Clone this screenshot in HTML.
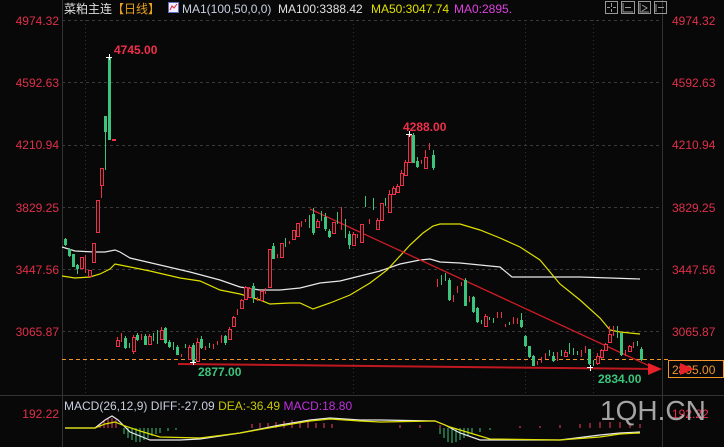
<!DOCTYPE html>
<html><head><meta charset="utf-8"><style>
body{margin:0;background:#080808;width:724px;height:447px;overflow:hidden;font-family:"Liberation Sans","Noto Sans CJK SC",sans-serif}
svg{position:absolute;left:0;top:0}
</style></head><body>
<svg width="724" height="447" viewBox="0 0 724 447" xmlns="http://www.w3.org/2000/svg" font-family="Liberation Sans, Noto Sans CJK SC, sans-serif">
<rect width="724" height="447" fill="#080808"/>
<!-- grid -->
<g stroke="#3a3a3a" stroke-dasharray="3,3" stroke-width="1">
<line x1="62" y1="20.5" x2="662" y2="20.5"/><line x1="62" y1="82.5" x2="662" y2="82.5"/>
<line x1="62" y1="145.5" x2="662" y2="145.5"/><line x1="62" y1="207.5" x2="662" y2="207.5"/>
<line x1="62" y1="269.5" x2="662" y2="269.5"/><line x1="62" y1="331.5" x2="662" y2="331.5"/>
</g>
<g stroke="#333" stroke-dasharray="1,3"><line x1="85.5" y1="20" x2="662" y2="20" stroke="none"/>
<line x1="85.5" y1="20" x2="85.5" y2="395"/><line x1="353.5" y1="20" x2="353.5" y2="395"/><line x1="525.5" y1="20" x2="525.5" y2="395"/><line x1="593.5" y1="20" x2="593.5" y2="395"/>
</g>
<line x1="62.5" y1="0" x2="62.5" y2="447" stroke="#333"/>
<line x1="662.5" y1="0" x2="662.5" y2="447" stroke="#333"/>
<line x1="0" y1="395.5" x2="724" y2="395.5" stroke="#333"/>
<!-- orange dashed -->
<line x1="62" y1="359.5" x2="668" y2="359.5" stroke="#f0962a" stroke-dasharray="4,3"/>
<!-- MA lines -->
<polyline fill="none" stroke="#e8e8e8" stroke-width="1.2" points="62,247 75,251 95,252 105,252 115,250 120,252 130,258 160,265 190,272 220,280 240,287 260,290 280,290 300,288 320,283 340,281 360,276 380,271 400,264 420,260 430,259 440,262 460,263 480,265 500,267 512,277 580,277 640,279"/>
<polyline fill="none" stroke="#e0e000" stroke-width="1.2" points="62,276 75,278 90,277 100,274 110,269 115,264 120,265 150,271 180,278 200,281 220,290 240,294 260,300 270,304 290,303 300,303 313,309 330,303 350,295 370,283 387,270 400,256 410,245 423,233 433,226 440,224 460,224 480,230 500,238 520,247 540,260 560,284 580,300 600,318 610,330 620,332 640,334"/>
<!-- trend lines -->
<line x1="310" y1="209" x2="656" y2="369" stroke="#d01c24" stroke-width="1.3"/>
<line x1="178" y1="364" x2="656" y2="369" stroke="#c01820" stroke-width="2"/>
<polygon points="648,363 662,369 648,375" fill="#e8202a"/>
<polygon points="672,363 686,369 672,375" fill="#e8202a"/>
<!-- candles: red -->
<g fill="none" stroke="#f0304a" stroke-width="1">
<path d="M81.5 257v12M85.5 255v18M89.5 270v7M93.5 243v20M97.5 200v33M101.5 168v30M113.5 139v1M117.5 337v10M121.5 333v9M133.5 335v19M141.5 334v6M149.5 334v11M161.5 327v13M181.5 354v3M189.5 345v15M197.5 338v24M205.5 346v4M213.5 344v5M217.5 341v4M221.5 335v8M229.5 327v13M233.5 316v11M237.5 309v6M241.5 299v10M245.5 286v14M249.5 287v11M257.5 297v4M261.5 290v11M265.5 288v6M269.5 249v39M277.5 254v4M281.5 243v15M289.5 241v3M293.5 230v10M297.5 223v14M301.5 221v6M305.5 219v3M317.5 219v9M333.5 222v12M341.5 207v23M353.5 232v14M357.5 234v4M361.5 224v19M369.5 219v5M377.5 218v12M381.5 203v18M389.5 190v23M393.5 186v9M397.5 184v9M401.5 170v16M405.5 160v16M409.5 133v30M421.5 160v4M425.5 150v19M429.5 143v7M437.5 279v8M453.5 295v7M457.5 286v7M461.5 282v4M469.5 296v6M485.5 314v13M497.5 312v6M501.5 312v6M505.5 324v3M513.5 317v7M517.5 318v6M537.5 361v4M541.5 357v6M545.5 353v6M557.5 352v9M565.5 350v7M581.5 350v7M585.5 346v7M597.5 353v12M601.5 349v10M605.5 343v8M609.5 326v17M613.5 326v10M625.5 350v6M629.5 345v7M633.5 342v6"/>
</g>
<g fill="#080808" stroke="#f0304a" stroke-width="1">
<rect x="80.5" y="257.5" width="3" height="11"/><rect x="88.5" y="270.5" width="3" height="6"/><rect x="92.5" y="243.5" width="3" height="19"/><rect x="96.5" y="200.5" width="3" height="32"/><rect x="100.5" y="168.5" width="3" height="17"/>
<rect x="116.5" y="340.5" width="3" height="6"/><rect x="132.5" y="337.5" width="3" height="14"/><rect x="148.5" y="336.5" width="3" height="8"/><rect x="160.5" y="330.5" width="3" height="9"/><rect x="188.5" y="347.5" width="3" height="12"/><rect x="196.5" y="342.5" width="3" height="19"/><rect x="228.5" y="329.5" width="3" height="10"/><rect x="232.5" y="317.5" width="3" height="9"/><rect x="240.5" y="300.5" width="3" height="8"/><rect x="244.5" y="287.5" width="3" height="12"/><rect x="248.5" y="288.5" width="3" height="9"/><rect x="260.5" y="291.5" width="3" height="9"/><rect x="268.5" y="249.5" width="3" height="38"/><rect x="280.5" y="243.5" width="3" height="14"/><rect x="292.5" y="230.5" width="3" height="9"/><rect x="296.5" y="223.5" width="3" height="13"/><rect x="316.5" y="221.5" width="3" height="6"/><rect x="332.5" y="222.5" width="3" height="11"/><rect x="352.5" y="234.5" width="3" height="11"/><rect x="360.5" y="224.5" width="3" height="18"/><rect x="376.5" y="220.5" width="3" height="9"/><rect x="380.5" y="203.5" width="3" height="17"/><rect x="388.5" y="194.5" width="3" height="18"/><rect x="392.5" y="188.5" width="3" height="6"/><rect x="396.5" y="186.5" width="3" height="6"/><rect x="400.5" y="173.5" width="3" height="12"/><rect x="404.5" y="162.5" width="3" height="13"/><rect x="408.5" y="135.5" width="3" height="27"/><rect x="424.5" y="157.5" width="3" height="11"/>
<rect x="484.5" y="316.5" width="3" height="10"/><rect x="608.5" y="334.5" width="3" height="8"/><rect x="600.5" y="350.5" width="3" height="7"/><rect x="596.5" y="356.5" width="3" height="7"/><rect x="604.5" y="344.5" width="3" height="6"/><rect x="564.5" y="352.5" width="3" height="4"/><rect x="628.5" y="346.5" width="3" height="5"/>
</g>
<rect x="112" y="139" width="4" height="2" fill="#f0304a"/>
<!-- candles: green -->
<g stroke="#3cc47c" stroke-width="1"><path d="M65.5 238v8M69.5 248v9M73.5 254v13M77.5 264v10M105.5 116v54M109.5 57v83M125.5 336v13M129.5 343v5M137.5 333v8M145.5 334v11M153.5 333v8M157.5 330v14M165.5 327v17M169.5 340v8M173.5 342v8M177.5 345v10M185.5 344v4M193.5 343v22M201.5 336v13M209.5 343v5M225.5 335v10M253.5 283v20M273.5 243v16M285.5 238v9M309.5 215v13M313.5 208v27M321.5 211v10M325.5 213v18M329.5 229v9M337.5 212v12M345.5 219v19M349.5 231v18M365.5 196v11M373.5 198v12M385.5 198v8M413.5 133v30M417.5 157v11M433.5 150v20M441.5 275v10M445.5 273v8M449.5 278v23M465.5 278v28M473.5 296v17M477.5 307v16M481.5 320v4M489.5 317v3M493.5 318v5M509.5 322v3M521.5 313v15M525.5 335v12M529.5 346v12M533.5 355v11M549.5 350v6M553.5 352v10M561.5 350v6M569.5 343v11M573.5 348v7M577.5 351v4M589.5 349v16M593.5 360v6M617.5 326v12M621.5 333v23M637.5 341v5M641.5 347v14"/></g>
<g fill="#3cc47c"><rect x="64" y="239" width="3" height="6"/><rect x="68" y="249" width="3" height="7"/><rect x="72" y="254" width="3" height="13"/><rect x="76" y="265" width="3" height="4"/><rect x="104" y="116" width="3" height="16"/><rect x="108" y="57" width="3" height="83"/><rect x="124" y="338" width="3" height="10"/><rect x="136" y="335" width="3" height="5"/><rect x="144" y="336" width="3" height="9"/><rect x="164" y="328" width="3" height="15"/><rect x="168" y="342" width="3" height="5"/><rect x="176" y="347" width="3" height="8"/><rect x="192" y="345" width="3" height="17"/><rect x="200" y="339" width="3" height="9"/><rect x="224" y="336" width="3" height="7"/><rect x="252" y="286" width="3" height="12"/><rect x="272" y="246" width="3" height="13"/><rect x="312" y="214" width="3" height="19"/><rect x="324" y="217" width="3" height="12"/><rect x="328" y="231" width="3" height="6"/><rect x="348" y="234" width="3" height="11"/><rect x="412" y="135" width="3" height="28"/><rect x="416" y="161" width="3" height="6"/><rect x="432" y="155" width="3" height="13"/><rect x="448" y="280" width="3" height="20"/><rect x="464" y="280" width="3" height="26"/><rect x="472" y="297" width="3" height="15"/><rect x="476" y="308" width="3" height="14"/><rect x="520" y="320" width="3" height="7"/><rect x="524" y="336" width="3" height="10"/><rect x="528" y="346" width="3" height="11"/><rect x="532" y="356" width="3" height="10"/><rect x="552" y="356" width="3" height="5"/><rect x="588" y="349" width="3" height="15"/><rect x="620" y="333" width="3" height="22"/><rect x="640" y="349" width="3" height="11"/></g>
<!-- markers -->
<g stroke="#fff" stroke-width="1"><path d="M106 57.5h6M109.5 54v6M406 134.5h6M409.5 131v6M190 362.5h6M193.5 360v5M587 367.5h6M590.5 365v6"/></g>
<!-- annotations -->
<g font-size="12" font-weight="bold"><text x="114" y="54" fill="#f0304a">4745.00</text><text x="403" y="131" fill="#f0304a">4288.00</text><text x="198" y="376" fill="#3cc47c">2877.00</text><text x="598" y="383" fill="#3cc47c">2834.00</text></g>
<!-- axis labels -->
<g font-size="12" fill="#e0304a"><g text-anchor="end"><text x="59" y="25">4974.32</text><text x="59" y="87">4592.63</text><text x="59" y="149">4210.94</text><text x="59" y="212">3829.25</text><text x="59" y="274">3447.56</text><text x="59" y="336">3065.87</text><text x="59" y="418">192.22</text></g>
<text x="672" y="25">4974.32</text><text x="672" y="87">4592.63</text><text x="672" y="149">4210.94</text><text x="672" y="212">3829.25</text><text x="672" y="274">3447.56</text><text x="672" y="336">3065.87</text><text x="672" y="418">192.22</text></g>
<rect x="668.5" y="360.5" width="55" height="17" fill="#080808" stroke="#f0962a"/>
<text x="672" y="374" font-size="12" fill="#f0962a">2895.00</text>
<polygon points="680,363 694,369 680,375" fill="#e8202a"/>
<!-- header -->
<g font-size="12"><text x="64" y="13" fill="#e0e0e0">菜粕主连</text><text x="112" y="13" fill="#e8a020">【日线】</text>
<rect x="168.5" y="2.5" width="10" height="10" fill="#f0f0ff" stroke="#6070c0"/><path d="M170 10l2-4 2 2 3-4" stroke="#e02030" fill="none"/>
<text x="182" y="13" fill="#c8d0e0">MA1(100,50,0,0)</text><text x="278" y="13" fill="#e0e0e0">MA100:3388.42</text><text x="371" y="13" fill="#e0e000">MA50:3047.74</text><text x="454" y="13" fill="#e040e0">MA0:2895.</text></g>
<g fill="none" stroke="#999"><rect x="605.5" y="1.5" width="12" height="12"/><rect x="621.5" y="1.5" width="13" height="12"/><rect x="638.5" y="1.5" width="12" height="12"/><rect x="654.5" y="1.5" width="12" height="12"/>
<path d="M611.5 3v4M611.5 9v3M607 7.5h3M613 7.5h3M623 3v9h10M625 7.5h6M640 3v9h9M642 5l5 3-5 3M656 4v8M658 7.5h6"/></g>
<!-- MACD -->
<text x="64" y="410" font-size="12" fill="#c8d0e0">MACD(26,12,9) DIFF:-27.09 <tspan fill="#c8c800">DEA:-36.49</tspan> <tspan fill="#c030e0">MACD:18.80</tspan></text>
<g stroke="#f04060" stroke-width="1"><path d="M100 428v-4M104 428v-7M108 428v-10M112 428v-10M116 428v-8M400 428v-3M420 428v-3M440 428v-3M520 428v-2M540 428v-2M560 428v-3M580 428v-4M590 428v-5M600 428v-6M610 428v-6M620 428v-6M630 428v-5M640 428v-4M276 428v-6M284 428v-7M292 428v-8M300 428v-7M308 428v-6M316 428v-5M324 428v-5M332 428v-4M252 428v-4M260 428v-5M268 428v-5"/></g>
<g stroke="#3cc47c" stroke-width="1"><path d="M124 428v6M128 428v10M132 428v12M136 428v14M140 428v14M144 428v12M148 428v10M152 428v8M156 428v6M160 428v5M168 428v3M176 428v2M440 428v6M444 428v10M448 428v14M452 428v15M456 428v14M460 428v12M464 428v10M468 428v8M472 428v6M480 428v4M490 428v2"/></g>
<polyline fill="none" stroke="#e8e8e8" stroke-width="1.2" points="65,428 95,428 105,420 112,416 118,420 130,432 150,440 180,440 200,439 240,433 280,425 310,420 330,418 360,420 380,420 435,421 445,425 460,433 480,440 500,440 560,440 600,435 620,433 640,432"/>
<polyline fill="none" stroke="#e0e000" stroke-width="1.2" points="65,428 95,428 105,424 115,422 125,426 140,431 160,437 200,438 240,433 280,426 310,421 330,419 360,421 380,422 435,421 450,427 470,433 490,439 560,440 600,437 620,434 640,433"/>
<text x="600" y="420" font-size="28" fill="#bfbfbf" fill-opacity="0.85">1QH.CN</text>
</svg>
</body></html>
